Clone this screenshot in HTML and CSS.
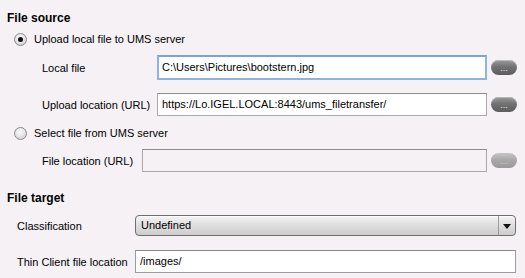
FILE: index.html
```html
<!DOCTYPE html>
<html lang="en">
<head>
  <meta charset="UTF-8" />
  <title>File transfer</title>
  <link rel="stylesheet" href="styles.css">
</head>
<body>
  <div class="panel">
    <div class="section-title first">File source</div>

    <label class="radio-row">
      <span class="radio checked"></span>
      <span>Upload local file to UMS server</span>
    </label>

    <div class="field-row row-local">
      <span class="label">Local file</span>
      <div class="input focused">C:\Users\Pictures\bootstern.jpg</div>
      <button class="dots">...</button>
    </div>

    <div class="field-row row-upload">
      <span class="label">Upload location (URL)</span>
      <div class="input">https://Lo.IGEL.LOCAL:8443/ums_filetransfer/</div>
      <button class="dots">...</button>
    </div>

    <label class="radio-row second">
      <span class="radio"></span>
      <span>Select file from UMS server</span>
    </label>

    <div class="field-row row-remote">
      <span class="label">File location (URL)</span>
      <div class="input disabled"></div>
      <button class="dots disabled">...</button>
    </div>

    <div class="section-title">File target</div>

    <div class="target-row row-class">
      <span class="label">Classification</span>
      <div class="select">
        <span class="select-value">Undefined</span>
        <span class="select-arrow"></span>
      </div>
    </div>

    <div class="target-row row-thin">
      <span class="label">Thin Client file location</span>
      <div class="input wide">/images/</div>
    </div>
  </div>
</body>
</html>
```

FILE: styles.css
```css
* {
  box-sizing: border-box;
  margin: 0;
  padding: 0;
}
body {
  background: #f5f1f5;
  font-family: 'Liberation Sans', Arial, sans-serif;
  font-size: 11px;
  color: #000;
}
.panel {
  width: 525px;
  height: 278px;
  padding-top: 11px;
}
.section-title {
  font-weight: bold;
  font-size: 12px;
  padding-left: 7px;
  height: 14px;
  line-height: 14px;
  margin-top: 19px;
}
.section-title.first {
  margin-top: 0;
}
.radio-row {
  display: flex;
  align-items: center;
  gap: 7px;
  padding-left: 14px;
  height: 16px;
  margin-top: 6px;
}
.radio-row.second {
  margin-top: 9px;
}
.radio {
  width: 13px;
  height: 13px;
  border-radius: 50%;
  border: 1px solid #8a8a8a;
  background: radial-gradient(circle at 45% 35%, #fdfdfd, #d9d9d9 70%, #c4c4c4);
  display: flex;
  align-items: center;
  justify-content: center;
}
.radio.checked::after {
  content: '';
  width: 5px;
  height: 5px;
  border-radius: 50%;
  background: #111;
}
.field-row {
  display: flex;
  align-items: center;
  margin-top: 8px;
}
.field-row .label {
  padding-left: 42px;
  width: 157px;
}
.row-remote .label {
  width: 142px;
}
.input {
  height: 23px;
  line-height: 21px;
  border: 1px solid #a9a9a9;
  border-top-color: #8c8c8c;
  background: #fff;
  padding-left: 4px;
  white-space: nowrap;
  overflow: hidden;
}
.field-row .input {
  flex: 0 0 auto;
  width: 330px;
}
.row-remote .input {
  width: 345px;
}
.input.focused {
  height: 25px;
  line-height: 21px;
  border: 2px solid #8db4df;
  border-top-color: #7aa3d6;
  padding-left: 3px;
}
.row-upload {
  margin-top: 13px;
}
.row-remote {
  margin-top: 8px;
}
.input.disabled {
  background: #f5f1f5;
}
.dots {
  margin-left: 4px;
  width: 26px;
  height: 15px;
  border: none;
  border-radius: 8px;
  background: linear-gradient(#9c9c9c, #727272 45%, #5d5d5d);
  color: #e8e8e8;
  font-family: 'Liberation Sans', Arial, sans-serif;
  font-size: 9px;
  line-height: 13px;
  padding-top: 2px;
  box-shadow: inset 0 1px 0 #b8b8b8;
}
.dots.disabled {
  background: linear-gradient(#c6c6c6, #a7a7a7 50%, #9a9a9a);
  color: #d6d6d6;
  box-shadow: none;
}
.target-row {
  display: flex;
  align-items: center;
}
.target-row .label {
  padding-left: 17px;
  width: 135px;
}
.row-class {
  margin-top: 10px;
}
.row-thin {
  margin-top: 14px;
}
.select {
  width: 381px;
  height: 21px;
  display: flex;
  border: 1px solid #6f6f6f;
  border-radius: 4px;
  background: linear-gradient(#f4f4f4, #dedede 50%, #cdcdcd);
  box-shadow: inset 0 1px 0 #fff;
}
.select-value {
  flex: 1;
  padding-left: 5px;
  line-height: 19px;
}
.select-arrow {
  width: 17px;
  border-left: 1px solid #9a9a9a;
  display: flex;
  align-items: center;
  justify-content: center;
}
.select-arrow::after {
  content: '';
  border-left: 4px solid transparent;
  border-right: 4px solid transparent;
  border-top: 5px solid #111;
  margin-top: 1px;
}
.input.wide {
  width: 381px;
  height: 23px;
  border-color: #9c9c9c;
  border-top-color: #8a8a8a;
}
```
